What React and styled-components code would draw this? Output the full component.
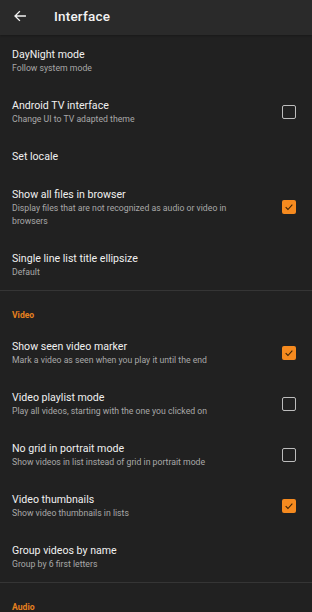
import React from "react";
import styled, { createGlobalStyle } from "styled-components";

const GlobalStyle = createGlobalStyle`
  html, body {
    margin: 0;
    padding: 0;
    background: #212121;
  }
  body {
    font-family: Roboto, "Noto Sans", "Liberation Sans", sans-serif;
    -webkit-font-smoothing: antialiased;
  }
`;

const sections = [
  {
    items: [
      { title: "DayNight mode", summary: "Follow system mode" },
      { title: "Android TV interface", summary: "Change UI to TV adapted theme", check: false },
      { title: "Set locale" },
      {
        title: "Show all files in browser",
        summary: "Display files that are not recognized as audio or video in browsers",
        check: true,
      },
      { title: "Single line list title ellipsize", summary: "Default" },
    ],
  },
  {
    name: "Video",
    items: [
      { title: "Show seen video marker", summary: "Mark a video as seen when you play it until the end", check: true },
      { title: "Video playlist mode", summary: "Play all videos, starting with the one you clicked on", check: false },
      { title: "No grid in portrait mode", summary: "Show videos in list instead of grid in portrait mode", check: false },
      { title: "Video thumbnails", summary: "Show video thumbnails in lists", check: true },
      { title: "Group videos by name", summary: "Group by 6 first letters" },
    ],
  },
  { name: "Audio", items: [] },
];

function BackArrow() {
  return (
    <svg width="14" height="14" viewBox="0 0 24 24" fill="none">
      <path
        d="M21 12H4M11 4.5L3.5 12L11 19.5"
        stroke="#f2f2f2"
        strokeWidth="2.4"
        strokeLinecap="square"
      />
    </svg>
  );
}

function CheckBox({ checked }) {
  return (
    <Box checked={checked}>
      {checked && (
        <svg width="10" height="10" viewBox="0 0 24 24" fill="none">
          <path d="M4 12.5L9.5 18L20 6.5" stroke="#3a2206" strokeWidth="2.6" />
        </svg>
      )}
    </Box>
  );
}

function App() {
  return (
    <Screen>
      <GlobalStyle />
      <Toolbar>
        <IconButton>
          <BackArrow />
        </IconButton>
        <Title>Interface</Title>
      </Toolbar>
      {sections.map((section, i) => (
        <Section key={i} first={i === 0}>
          {section.name && <Category>{section.name}</Category>}
          {section.items.map((item) => (
            <Row key={item.title}>
              <Texts>
                <ItemTitle>{item.title}</ItemTitle>
                {item.summary && <Summary>{item.summary}</Summary>}
              </Texts>
              {item.check !== undefined && <CheckBox checked={item.check} />}
            </Row>
          ))}
        </Section>
      ))}
    </Screen>
  );
}

const Screen = styled.div`
  width: 312px;
  height: 612px;
  overflow: hidden;
  background: #212121;
`;

const Toolbar = styled.div`
  height: 35px;
  display: flex;
  align-items: center;
  background: #2a2a2a;
  box-shadow: 0 1px 2px rgba(0, 0, 0, 0.25);
`;

const IconButton = styled.div`
  width: 40px;
  display: flex;
  align-items: center;
  padding-left: 13px;
  box-sizing: border-box;
  margin-top: -4px;
`;

const Title = styled.h1`
  margin: -4px 0 0 14px;
  font-size: 13.5px;
  font-weight: 500;
  color: #f2f2f2;
  letter-spacing: 0.2px;
`;

const Section = styled.div`
  border-top: ${(p) => (p.first ? "none" : "1.5px solid #353535")};
`;

const Category = styled.div`
  padding: 18px 12px 6px;
  line-height: 12px;
  font-size: 8.6px;
  font-weight: 700;
  color: #e5801f;
`;

const Row = styled.div`
  display: flex;
  align-items: center;
  padding: 13px 16px 11px 12px;
  min-height: 14px;
`;

const Texts = styled.div`
  flex: 1;
  min-width: 0;
`;

const ItemTitle = styled.div`
  font-size: 10.6px;
  font-weight: 400;
  line-height: 14px;
  color: #f0f0f0;
`;

const Summary = styled.div`
  font-size: 8.7px;
  line-height: 13px;
  color: #a8a8a8;
  padding-right: 36px;
`;

const Box = styled.div`
  width: 14px;
  height: 14px;
  margin-top: -2px;
  box-sizing: border-box;
  border-radius: 2px;
  display: flex;
  align-items: center;
  justify-content: center;
  flex-shrink: 0;
  background: ${(p) => (p.checked ? "#f58a1f" : "transparent")};
  border: ${(p) => (p.checked ? "none" : "1.6px solid #bdbdbd")};
`;

export default App;
